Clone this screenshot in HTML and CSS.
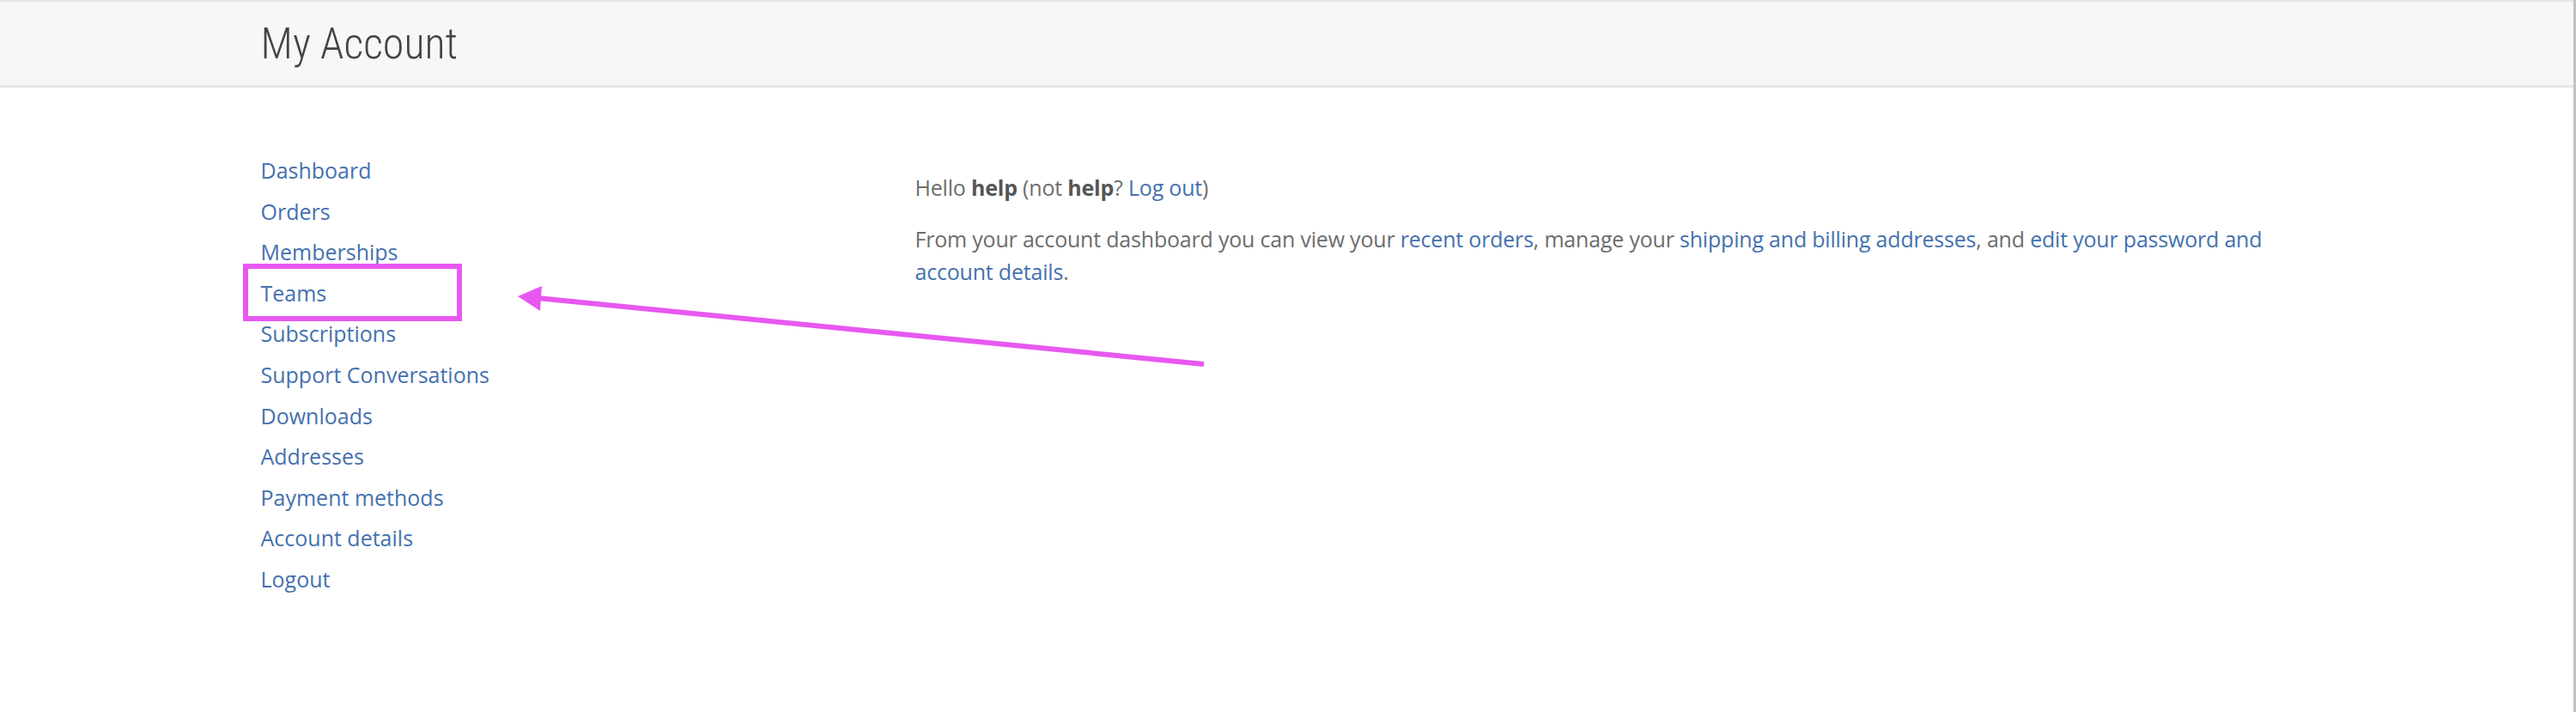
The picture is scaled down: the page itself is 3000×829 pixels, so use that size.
FILE: index.html
```html
<!DOCTYPE html>
<html lang="en">

<head>
    <meta charset="UTF-8">
    <meta name="viewport" content="width=device-width, initial-scale=1.0">
    <title>My Account</title>
    <link rel="stylesheet" href="styles.css">
</head>

<body>
    <header class="page-header">
        <div class="container">
            <h1 class="page-title">My Account</h1>
        </div>
    </header>

    <main class="container account">
        <nav class="account-nav">
            <ul>
                <li><a href="#">Dashboard</a></li>
                <li><a href="#">Orders</a></li>
                <li><a href="#">Memberships</a></li>
                <li><a href="#">Teams</a></li>
                <li><a href="#">Subscriptions</a></li>
                <li><a href="#">Support Conversations</a></li>
                <li><a href="#">Downloads</a></li>
                <li><a href="#">Addresses</a></li>
                <li><a href="#">Payment methods</a></li>
                <li><a href="#">Account details</a></li>
                <li><a href="#">Logout</a></li>
            </ul>
        </nav>

        <div class="account-content">
            <p>Hello <strong>help</strong> (not <strong>help</strong>? <a href="#">Log out</a>)</p>
            <p>From your account dashboard you can view your <a href="#">recent orders</a>, manage your <a href="#">shipping and billing addresses</a>, and <a href="#">edit your password and account details</a>.</p>
        </div>
    </main>

    <!-- annotation drawn over the screenshot -->
    <svg class="annotation" width="3000" height="829" viewBox="0 0 3000 829">
        <rect x="286" y="310" width="249" height="61" fill="none" stroke="#e858f1" stroke-width="6" />
        <line x1="1402" y1="424" x2="626" y2="347" stroke="#e858f1" stroke-width="6" />
        <polygon points="603,345 631,333 629,362" fill="#e858f1" />
    </svg>
</body>

</html>
```

FILE: styles.css
```css
* {
    margin: 0;
    padding: 0;
    box-sizing: border-box;
}

body {
    position: relative;
    min-height: 829px;
    background-color: #fff;
    border-right: 3px solid #c2c2c2;
    font-family: "Open Sans", Arial, sans-serif;
    font-size: 25px;
    color: #6d6d6d;
}

a {
    color: #4571ae;
    text-decoration: none;
}

.container {
    width: 2390px;
    margin: 0 auto;
}

.page-header {
    height: 102px;
    background-color: #f7f7f7;
    border-top: 2px solid #e4e4e4;
    border-bottom: 3px solid #e5e5e5;
}

.page-header .container {
    height: 100%;
    display: flex;
    align-items: center;
}

.page-title {
    font-family: "Roboto Condensed", "Liberation Sans Narrow", Roboto, sans-serif;
    font-stretch: condensed;
    font-weight: 300;
    font-size: 50px;
    color: #444;
    margin-top: 1px;
}

.account {
    display: grid;
    grid-template-columns: 762px 1fr;
    padding-top: 73px;
}

.account-nav ul {
    list-style: none;
}

.account-nav li {
    line-height: 47.6px;
}

.account-content {
    padding-top: 24px;
    line-height: 38px;
    letter-spacing: -0.2px;
}

.account-content p {
    margin-bottom: 22px;
}

.account-content strong {
    color: #555;
    font-weight: 700;
}

.annotation {
    position: absolute;
    top: 0;
    left: 0;
    pointer-events: none;
}
```
